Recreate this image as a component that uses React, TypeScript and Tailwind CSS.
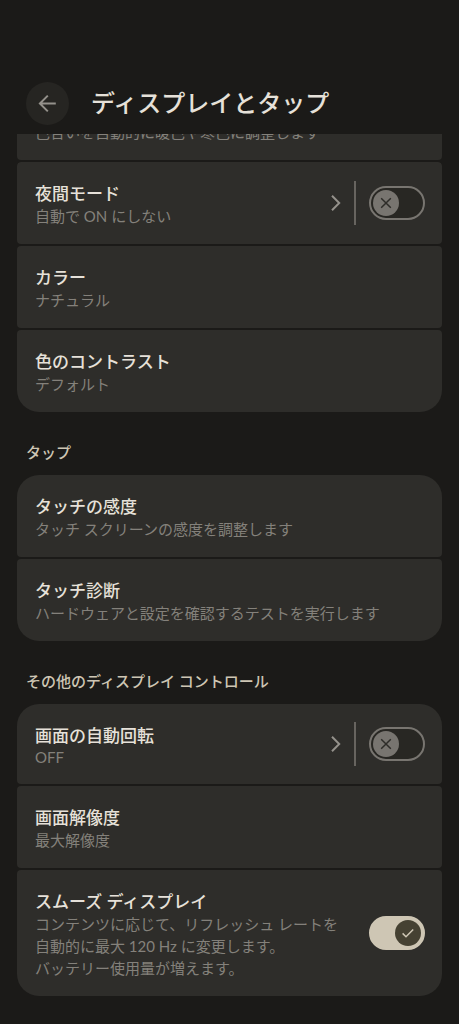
import React, { useState } from 'react'
import clsx from 'clsx'

type Item = {
	id: string
	title?: string
	summary: string
	toggle?: boolean
	link?: boolean
	latin?: boolean
}

const displayItems: Item[] = [
	{ id: 'night', title: '夜間モード', summary: '自動で ON にしない', toggle: false, link: true },
	{ id: 'color', title: 'カラー', summary: 'ナチュラル' },
	{ id: 'contrast', title: '色のコントラスト', summary: 'デフォルト' },
]

const tapItems: Item[] = [
	{ id: 'touch', title: 'タッチの感度', summary: 'タッチ スクリーンの感度を調整します' },
	{ id: 'diagnostics', title: 'タッチ診断', summary: 'ハードウェアと設定を確認するテストを実行します' },
]

const otherItems: Item[] = [
	{ id: 'rotate', title: '画面の自動回転', summary: 'OFF', toggle: false, link: true, latin: true },
	{ id: 'resolution', title: '画面解像度', summary: '最大解像度' },
	{
		id: 'smooth',
		title: 'スムーズ ディスプレイ',
		summary: 'コンテンツに応じて、リフレッシュ レートを\n自動的に最大 120 Hz に変更します。\nバッテリー使用量が増えます。',
		toggle: true,
	},
]

function Switch({ id, initial }: { id: string; initial: boolean }) {
	const [on, setOn] = useState(initial)

	return (
		<span className="grid shrink-0 items-center">
			<input
				id={id}
				type="checkbox"
				role="switch"
				aria-labelledby={`${id}-title`}
				checked={on}
				onChange={() => setOn(!on)}
				className={clsx(
					'col-start-1 row-start-1 h-[34px] w-14 cursor-pointer appearance-none rounded-full border-2',
					on ? 'border-[#cec6b4] bg-[#cec6b4]' : 'border-[#787570] bg-[#282723]'
				)}
			/>
			<span
				className={clsx(
					'pointer-events-none col-start-1 row-start-1 mx-1 flex size-[26px] items-center justify-center rounded-full',
					on ? 'justify-self-end bg-[#454132] text-[#cec6b4]' : 'bg-[#787570] text-[#2e2d29]'
				)}>
				<svg viewBox="0 0 16 16" className="size-4" fill="none" stroke="currentColor" strokeWidth="1.5">
					{on ? <path d="M2.6 8.4l3.4 3.4 7.2-7.4" /> : <path d="M3.2 3.2l9.6 9.6M12.8 3.2l-9.6 9.6" />}
				</svg>
			</span>
		</span>
	)
}

function Row({ item }: { item: Item }) {
	const hasToggle = item.toggle !== undefined
	const text = (
		<>
			<span id={`${item.id}-title`} className="block text-[17px] leading-[22px] font-medium text-[#e6e1d9]">
				{item.title}
			</span>
			<span
				className={clsx(
					'block text-[15px] whitespace-pre-line text-[#84817b]',
					item.latin ? 'leading-5' : 'leading-[22px]'
				)}>
				{item.summary}
			</span>
		</>
	)

	return (
		<li className="flex items-center rounded-sm bg-[#2e2d2a] pr-[17px] pl-[18px]">
			{hasToggle && !item.link ? (
				<label htmlFor={item.id} className="min-w-0 flex-1 cursor-pointer pt-[21px] pb-[17px]">
					{text}
				</label>
			) : (
				<button type="button" className="min-w-0 flex-1 cursor-pointer pt-[21px] pb-[17px] text-left">
					{text}
				</button>
			)}
			{item.link && (
				<>
					<svg viewBox="0 0 12 18" className="mr-3 h-[18px] w-3 shrink-0" fill="none" stroke="#94918b" strokeWidth="2">
						<path d="M2 1.8L9.2 9 2 16.2" />
					</svg>
					<span className="mr-[13px] h-11 w-0.5 shrink-0 bg-[#67645f]" />
				</>
			)}
			{hasToggle && <Switch id={item.id} initial={!!item.toggle} />}
		</li>
	)
}

function List({ items, continued }: { items: Item[]; continued?: boolean }) {
	return (
		<ul
			className={clsx(
				'flex flex-col gap-0.5 overflow-hidden',
				continued ? 'mt-0.5 rounded-t-sm rounded-b-[22px]' : 'rounded-[22px]'
			)}>
			{items.map((item) => (
				<Row key={item.id} item={item} />
			))}
		</ul>
	)
}

function Heading({ children }: { children: React.ReactNode }) {
	return (
		<h2 className="px-[9px] pt-[29px] pb-3 text-[15px] leading-[22px] font-medium text-[#cec6b4]">{children}</h2>
	)
}

export default function App() {
	return (
		<div className="min-h-screen bg-[#1b1a18] pb-7 font-['Lato','Noto_Sans_CJK_JP',sans-serif]" lang="ja">
			<header className="flex items-center gap-[22px] px-[26px] pt-[82px] pb-[9px]">
				<button
					type="button"
					aria-label="戻る"
					className="flex size-[43px] shrink-0 items-center justify-center rounded-full bg-[#262522] text-[#94918b]">
					<svg viewBox="0 0 19 19" className="size-[19px]" fill="none" stroke="currentColor" strokeWidth="2">
						<path d="M17.8 9.5H2.4M9.8 1.6L1.9 9.5l7.9 7.9" />
					</svg>
				</button>
				<h1 className="pb-0.5 text-2xl leading-[30px] font-medium text-[#e6e1d9]">ディスプレイとタップ</h1>
			</header>

			<main className="px-[17px]">
				{/* scrolled under the header, only the lower edge shows */}
				<div className="flex h-[26px] flex-col justify-end overflow-hidden rounded-b-sm bg-[#2e2d2a] px-[18px] pb-[17px]">
					<p className="shrink-0 text-[15px] leading-[22px] text-[#84817b]">色合いを自動的に暖色や寒色に調整します</p>
				</div>
				<List items={displayItems} continued />

				<Heading>タップ</Heading>
				<List items={tapItems} />

				<Heading>その他のディスプレイ コントロール</Heading>
				<List items={otherItems} />
			</main>
		</div>
	)
}
